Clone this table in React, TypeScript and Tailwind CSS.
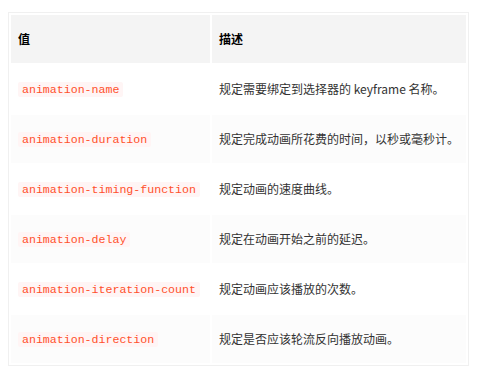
import React from "react";

const rows: [string, string][] = [
  ["animation-name", "规定需要绑定到选择器的 keyframe 名称。"],
  ["animation-duration", "规定完成动画所花费的时间，以秒或毫秒计。"],
  ["animation-timing-function", "规定动画的速度曲线。"],
  ["animation-delay", "规定在动画开始之前的延迟。"],
  ["animation-iteration-count", "规定动画应该播放的次数。"],
  ["animation-direction", "规定是否应该轮流反向播放动画。"],
];

const cjk = { fontFamily: '"Noto Sans CJK SC", "Noto Sans", sans-serif' };

export default function App() {
  return (
    <div className="w-[491px] h-[387px] bg-white pt-[12px] pl-[8px]" style={cjk}>
      <div className="w-[461px] border border-[#f0f0f0] p-[2px] grid grid-cols-[199px_254px] gap-[2px]">
        <div className="h-[48px] bg-[#f4f4f4] flex items-center px-[7px] text-[12px] font-bold text-black">值</div>
        <div className="h-[48px] bg-[#f4f4f4] flex items-center px-[7px] text-[12px] font-bold text-black">描述</div>
        {rows.map(([k, v], i) => {
          const bg = i % 2 === 1 ? "bg-[#fcfcfc]" : "bg-white";
          return (
            <React.Fragment key={k}>
              <div className={`h-[48px] ${bg} flex items-center px-[7px]`}>
                <span className="h-[15px] leading-[15px] px-[4px] rounded-[2px] bg-[#fff5f5] text-[#ff502c] text-[11.6px] font-['Liberation_Mono',monospace]">
                  {k}
                </span>
              </div>
              <div className={`h-[48px] ${bg} flex items-center px-[7px] text-[12px] text-[#333]`}>{v}</div>
            </React.Fragment>
          );
        })}
      </div>
    </div>
  );
}
